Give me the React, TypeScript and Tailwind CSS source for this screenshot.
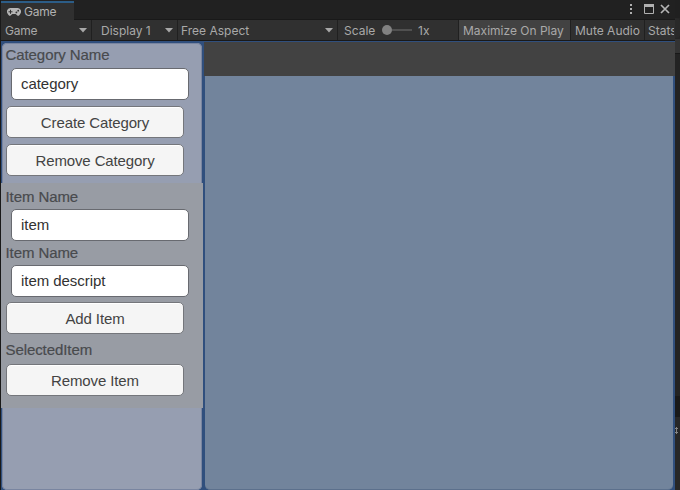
import type { ReactNode } from 'react';

const Caret = () => (
  <svg className="shrink-0" width="8" height="5" viewBox="0 0 8 5">
    <path d="M0 0h8L4 4.6z" fill="#a8a8a8" />
  </svg>
);

const Label = ({ children, className = '' }: { children: ReactNode; className?: string }) => (
  <div className={`ml-[3.5px] h-[18px] text-[15px] leading-[18px] tracking-[-0.08px] text-[#484a4d] [-webkit-text-stroke:0.2px_#484a4d] ${className}`}>
    {children}
  </div>
);

const Field = ({ children, className = '' }: { children: ReactNode; className?: string }) => (
  <div className={`ml-[9px] h-8 w-[178px] rounded-[5px] border border-[#686a70] bg-white pl-[9px] text-[15px] leading-[29px] tracking-[-0.05px] text-[#323232] ${className}`}>
    {children}
  </div>
);

const Button = ({ children, className = '' }: { children: ReactNode; className?: string }) => (
  <button className={`ml-1 block h-8 w-[178px] rounded-[5px] border border-[#74767b] bg-[#f5f5f5] text-center text-[15px] leading-[31px] tracking-[-0.12px] text-[#434343] shadow-[inset_0_1px_0_#ffffff] ${className}`}>
    {children}
  </button>
);

export default function App() {
  return (
    <div className="flex h-[490px] w-[680px] overflow-hidden bg-[#191919] pl-px font-['Liberation_Sans',Arial,sans-serif]">
      <main className="flex w-[674px] flex-col overflow-hidden">
        <header className="flex h-5 shrink-0 justify-between border-b border-[#191919] bg-[#212121] font-[Inter,sans-serif] text-[12px] text-[#b2b2b2]">
          <div className="mt-px flex h-[19px] w-[73px] items-center border-t-2 border-[#2c5d87] bg-[#303030] pl-[6px]">
            <svg width="14" height="8" viewBox="0 0 14 8">
              <path d="M3.6 0h6.8a3.5 3.5 0 0 1 3.2 5.2C12.8 7 11.8 8 10.7 7.7 9.7 7.4 9.3 6.2 8.5 6h-3C4.7 6.2 4.3 7.4 3.3 7.7 2.2 8 1.2 7 .4 5.2A3.5 3.5 0 0 1 3.6 0z" fill="#b5b5b5" />
              <path d="M3.5 1.8v4M1.5 3.8h4" stroke="#303030" />
              <circle cx="11.2" cy="2.7" r=".9" fill="#303030" />
              <circle cx="9.4" cy="4.4" r=".9" fill="#303030" />
            </svg>
            <span className="ml-[3px] leading-4 tracking-[-0.2px]">Game</span>
          </div>
          <svg className="mt-[3px] mr-[4px]" width="42" height="12" viewBox="0 0 42 12" fill="none">
            <path d="M1 1h2v2H1zM1 5h2v2H1zM1 9h2v2H1z" fill="#b0b0b0" />
            <path d="M15.5 1.5h9v9h-9z" stroke="#b0b0b0" />
            <path d="M15 1h10v3H15z" fill="#b0b0b0" />
            <path d="M32 2l8 8M40 2l-8 8" stroke="#b5b5b5" strokeWidth="1.7" />
          </svg>
        </header>
        <nav className="flex h-[21px] shrink-0 border-b border-[#191919] bg-[#303030] font-[Inter,sans-serif] text-[12px] leading-[21px] whitespace-nowrap text-[#a9a9a9]">
          <div className="flex w-[91px] shrink-0 items-center justify-between border-r border-[#202020] pr-1 pl-1"><span className="tracking-[-0.2px]">Game</span><Caret /></div>
          <div className="flex w-[86px] shrink-0 items-center justify-between border-r border-[#202020] pr-1 pl-[9px]"><span>Display 1</span><Caret /></div>
          <div className="flex w-[160px] shrink-0 items-center justify-between border-r border-[#202020] pr-1 pl-[3px]"><span>Free Aspect</span><Caret /></div>
          <div className="flex w-[121px] shrink-0 items-center border-r border-[#202020] pl-[6px]">
            <span className="w-[33px]">Scale</span>
            <div className="ml-[5px] h-[10px] w-[10px] rounded-full bg-[#828282]" />
            <div className="h-[2px] w-5 bg-[#505050]" />
            <span className="ml-[6px]">1x</span>
          </div>
          <div className="flex w-[112px] shrink-0 items-center border-r border-[#202020] bg-[#424242] pl-1">Maximize On Play</div>
          <div className="flex w-[74px] shrink-0 items-center border-r border-[#202020] pl-1">Mute Audio</div>
          <div className="flex w-[29px] shrink-0 items-center overflow-hidden pl-[3px]">Stats</div>
        </nav>
        <section className="flex h-[449px] shrink-0 bg-[#304f7d]">
          <aside className="mt-[2px] ml-px h-[447px] w-[200px] shrink-0">
            <div className="flex h-full flex-col rounded-[5px] bg-[#969eb1] shadow-[inset_0_0_0_1px_#7985a0]">
              <Label className="mt-[3px]">Category Name</Label>
              <Field className="mt-1">category</Field>
              <Button className="mt-[6px]">Create Category</Button>
              <Button className="mt-[6px]">Remove Category</Button>
              <div className="-mx-px mt-[7px] h-[225px] bg-[#989ca4] px-px pt-[5px]">
                <Label>Item Name</Label>
                <Field className="mt-[3px]">item</Field>
                <Label className="mt-[3px]">Item Name</Label>
                <Field className="mt-[3px]">item descript</Field>
                <Button className="mt-[5px]">Add Item</Button>
                <Label className="mt-[7px]">SelectedItem</Label>
                <Button className="mt-[5px]">Remove Item</Button>
              </div>
            </div>
          </aside>
          <div className="mt-px ml-[2px] flex w-[471px] flex-col">
            <div className="h-[34px] bg-[#424242]" />
            <div className="mr-[2px] ml-px h-[414px] rounded-b-[5px] border-b border-[#5c708c] bg-[#72849c]" />
          </div>
        </section>
      </main>
      <aside className="flex w-[5px] flex-col bg-[#252525]">
        <div className="h-[18px] bg-[#202020]" />
        <div className="h-[20px] rounded-r bg-[#292929]" />
        <div className="mt-px h-[15px] border-b border-[#181818] bg-[#333333]" />
        <div className="h-[342px] bg-[#232323]" />
        <div className="h-[21px] bg-[#191919]" />
        <div className="h-[73px] bg-[#272727] pt-[10px]">
          <svg width="5" height="7" viewBox="0 0 5 7"><path d="M0 1.5h3M0 5.5h3M1.5 0v7" stroke="#858585" /></svg>
        </div>
      </aside>
    </div>
  );
}
